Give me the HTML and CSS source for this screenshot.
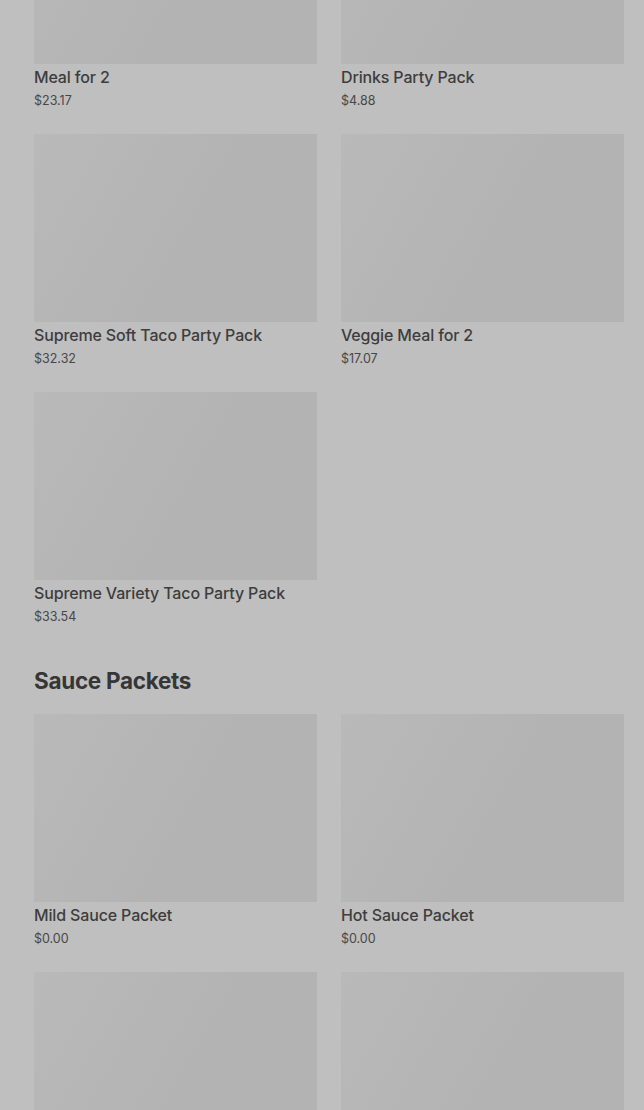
FILE: index.html
```html
<!DOCTYPE html>
<html lang="en">
<head>
<meta charset="utf-8">
<title>Menu</title>
<link rel="stylesheet" href="styles.css">
</head>
<body>
<main class="menu">
  <section class="category category-first">
    <div class="grid">
      <div class="card"><div class="thumb"></div><div class="name">Meal for 2</div><div class="price">$23.17</div></div>
      <div class="card"><div class="thumb"></div><div class="name">Drinks Party Pack</div><div class="price">$4.88</div></div>
      <div class="card"><div class="thumb"></div><div class="name">Supreme Soft Taco Party Pack</div><div class="price">$32.32</div></div>
      <div class="card"><div class="thumb"></div><div class="name">Veggie Meal for 2</div><div class="price">$17.07</div></div>
      <div class="card"><div class="thumb"></div><div class="name">Supreme Variety Taco Party Pack</div><div class="price">$33.54</div></div>
    </div>
  </section>
  <section class="category">
    <h2 class="category-title">Sauce Packets</h2>
    <div class="grid">
      <div class="card"><div class="thumb"></div><div class="name">Mild Sauce Packet</div><div class="price">$0.00</div></div>
      <div class="card"><div class="thumb"></div><div class="name">Hot Sauce Packet</div><div class="price">$0.00</div></div>
      <div class="card"><div class="thumb"></div></div>
      <div class="card"><div class="thumb"></div></div>
    </div>
  </section>
</main>
</body>
</html>
```

FILE: styles.css
```css
html, body {
  margin: 0;
  padding: 0;
  background: #bfbfbf;
}

body {
  font-family: Inter, "Liberation Sans", Arial, sans-serif;
  color: #3b3b3b;
}

.menu {
  padding: 0 20px 0 34px;
}

.category-first {
  margin-top: -124px;
}

.category-title {
  margin: 36px 0 17px;
  font-size: 22.5px;
  line-height: 32px;
  font-weight: 700;
  letter-spacing: -0.3px;
  color: #363636;
}

.grid {
  display: grid;
  grid-template-columns: 1fr 1fr;
  column-gap: 24px;
  row-gap: 21px;
}

.thumb {
  height: 188px;
  background: linear-gradient(120deg, #b9b9b9 0%, #b6b6b6 30%, #b3b3b3 55%, #b3b3b3 100%);
}

.name {
  padding-top: 2px;
  font-size: 16px;
  line-height: 22px;
  font-weight: 500;
  color: #3d3d3d;
  letter-spacing: -0.15px;
}

.price {
  padding-top: 1px;
  font-size: 12.5px;
  line-height: 24px;
  color: #474747;
}
```
